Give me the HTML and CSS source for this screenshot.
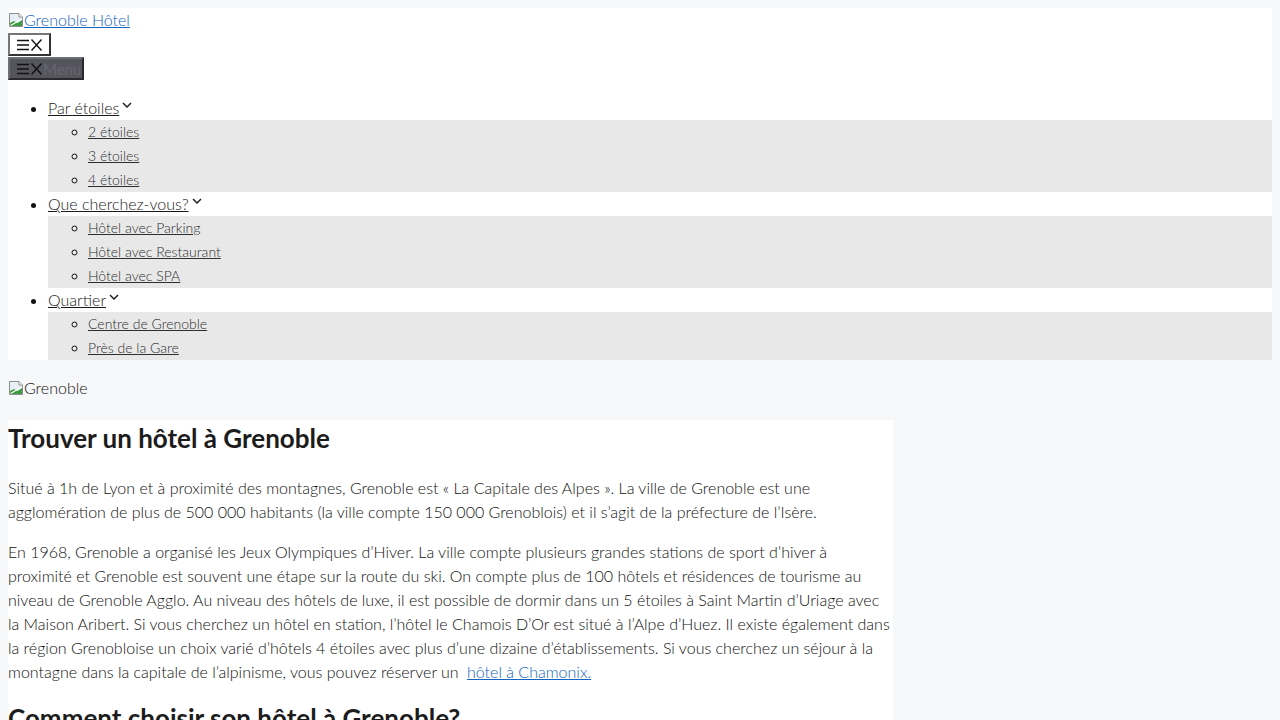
FILE: index.html
```html
<!DOCTYPE html>
<html lang="fr">
<head>
  <meta charset="UTF-8">
  <title>Grenoble Hôtel</title>
  <meta name="viewport" content="width=device-width, initial-scale=1.0">
  <link rel="stylesheet" href="styles.css">
</head>
<body>

  <!-- En-tête : logo, boutons du menu mobile et navigation -->
  <header class="site-header">
    <div class="logo">
      <a href="#">
        <svg class="img-casse" viewBox="0 0 16 16" width="16" height="16">
          <path d="M1.5 1.5H11L14.5 5V14.5H1.5Z" fill="#e6eef6" stroke="#8d8d8d"/>
          <path d="M11 1.5V5H14.5" fill="#fff" stroke="#8d8d8d"/>
          <path d="M2 14V11L6 9L9.5 11L14 8V14Z" fill="#3f9b3f"/>
          <path d="M2.5 13.5L14 7" stroke="#fff" stroke-width="1.2"/>
        </svg>Grenoble Hôtel</a>
    </div>

    <button class="menu-toggle">
      <svg viewBox="0 0 27 14" width="27" height="14">
        <path d="M1 2.5H13M1 7H13M1 11.5H13" stroke="#111" stroke-width="1.4"/>
        <path d="M15.5 1.5L25.5 12.5M25.5 1.5L15.5 12.5" stroke="#111" stroke-width="1.4"/>
      </svg>
    </button>
    <button class="menu-toggle sombre">
      <svg viewBox="0 0 27 14" width="27" height="14">
        <path d="M1 2.5H13M1 7H13M1 11.5H13" stroke="#111" stroke-width="1.4"/>
        <path d="M15.5 1.5L25.5 12.5M25.5 1.5L15.5 12.5" stroke="#111" stroke-width="1.4"/>
      </svg><span>Menu</span>
    </button>

    <ul class="nav">
      <li>
        <a href="#">Par étoiles</a><svg class="chevron" viewBox="0 0 10 6" width="10" height="6"><path d="M1 1L5 5L9 1" fill="none" stroke="#222" stroke-width="1.5"/></svg>
        <ul class="sous-menu">
          <li><a href="#">2 étoiles</a></li>
          <li><a href="#">3 étoiles</a></li>
          <li><a href="#">4 étoiles</a></li>
        </ul>
      </li>
      <li>
        <a href="#">Que cherchez-vous?</a><svg class="chevron" viewBox="0 0 10 6" width="10" height="6"><path d="M1 1L5 5L9 1" fill="none" stroke="#222" stroke-width="1.5"/></svg>
        <ul class="sous-menu">
          <li><a href="#">Hôtel avec Parking</a></li>
          <li><a href="#">Hôtel avec Restaurant</a></li>
          <li><a href="#">Hôtel avec SPA</a></li>
        </ul>
      </li>
      <li>
        <a href="#">Quartier</a><svg class="chevron" viewBox="0 0 10 6" width="10" height="6"><path d="M1 1L5 5L9 1" fill="none" stroke="#222" stroke-width="1.5"/></svg>
        <ul class="sous-menu">
          <li><a href="#">Centre de Grenoble</a></li>
          <li><a href="#">Près de la Gare</a></li>
        </ul>
      </li>
    </ul>
  </header>

  <!-- Image de couverture (non chargée) -->
  <div class="couverture">
    <svg class="img-casse" viewBox="0 0 16 16" width="16" height="16">
      <path d="M1.5 1.5H11L14.5 5V14.5H1.5Z" fill="#e6eef6" stroke="#8d8d8d"/>
      <path d="M11 1.5V5H14.5" fill="#fff" stroke="#8d8d8d"/>
      <path d="M2 14V11L6 9L9.5 11L14 8V14Z" fill="#3f9b3f"/>
      <path d="M2.5 13.5L14 7" stroke="#fff" stroke-width="1.2"/>
    </svg>Grenoble
  </div>

  <!-- Contenu principal -->
  <main class="contenu">
    <h2>Trouver un hôtel à Grenoble</h2>
    <p>Situé à 1h de Lyon et à proximité des montagnes, Grenoble est « La Capitale des Alpes ». La ville de Grenoble est une agglomération de plus de 500 000 habitants (la ville compte 150 000 Grenoblois) et il s’agit de la préfecture de l’Isère.</p>
    <p>En 1968, Grenoble a organisé les Jeux Olympiques d’Hiver. La ville compte plusieurs grandes stations de sport d’hiver à proximité et Grenoble est souvent une étape sur la route du ski. On compte plus de 100 hôtels et résidences de tourisme au niveau de Grenoble Agglo. Au niveau des hôtels de luxe, il est possible de dormir dans un 5 étoiles à Saint Martin d’Uriage avec la Maison Aribert. Si vous cherchez un hôtel en station, l’hôtel le Chamois D’Or est situé à l’Alpe d’Huez. Il existe également dans la région Grenobloise un choix varié d’hôtels 4 étoiles avec plus d’une dizaine d’établissements. Si vous cherchez un séjour à la montagne dans la capitale de l’alpinisme, vous pouvez réserver un <a href="#">hôtel à Chamonix.</a></p>
    <h2>Comment choisir son hôtel à Grenoble?</h2>
    <p>Grenoble propose un large choix d’hôtels, du petit établissement familial à la grande chaîne.</p>
  </main>

</body>
</html>
```

FILE: styles.css
```css
/* ---------- Base ---------- */
body {
  margin: 8px;
  background-color: #f7f8f9;
  font-family: Lato, "Open Sans", sans-serif;
  font-weight: 300;
  font-size: 16px;
  line-height: 24px;
  color: #111;
}
a {
  color: #1565c0;
}
.img-casse {
  display: inline-block;
  vertical-align: -2px;
}

/* ---------- En-tête ---------- */
.site-header {
  background: #fff;
}
.logo {
  height: 24px;
}
.menu-toggle {
  display: flex;
  align-items: center;
  height: 23px;
  margin: 1px 0 0;
  padding: 0 6px;
  background: #fff;
  border: 2px solid;
  border-color: #767676 #333 #333 #767676;
  font-family: inherit;
  font-size: 15px;
  cursor: pointer;
}
.menu-toggle.sombre {
  background: #55555e;
  border-color: #6e6e76 #2a2a2e #2a2a2e #6e6e76;
  padding-right: 1px;
}
.menu-toggle.sombre span {
  color: #66666e;
}

/* ---------- Navigation ---------- */
.nav {
  margin: 16px 0 0;
  padding-left: 40px;
}
.nav > li > a {
  color: #1a1a1a;
}
.chevron {
  margin-left: 3px;
  vertical-align: 6px;
}
.sous-menu {
  margin: 0;
  padding-left: 40px;
  background: #e8e8e8;
  list-style: circle;
  font-size: 14px;
}
.sous-menu a {
  color: #2e2e2e;
}

/* ---------- Couverture ---------- */
.couverture {
  margin: 16px 0 20px;
  height: 24px;
}

/* ---------- Contenu ---------- */
.contenu {
  width: 885px;
  background: #fff;
}
.contenu h2 {
  margin: 0 0 20px;
  font-size: 26px;
  font-weight: 700;
  line-height: 36px;
  color: #1c1c1c;
}
.contenu p {
  margin: 0 0 16px;
}
.contenu p a {
  margin-left: 4px;
}
```
